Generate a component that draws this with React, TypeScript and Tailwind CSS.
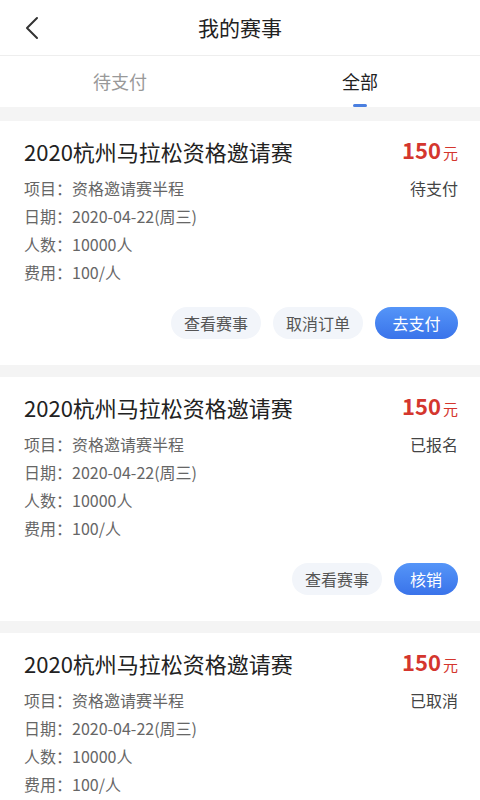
import React from 'react';

interface Order {
  title: string;
  price: number;
  status: string;
  item: string;
  date: string;
  count: string;
  fee: string;
  actions: { label: string; primary?: boolean; width: string }[];
}

const orders: Order[] = [
  {
    title: '2020杭州马拉松资格邀请赛',
    price: 150,
    status: '待支付',
    item: '资格邀请赛半程',
    date: '2020-04-22(周三)',
    count: '10000人',
    fee: '100/人',
    actions: [
      { label: '查看赛事', width: 'w-[90px]' },
      { label: '取消订单', width: 'w-[90px]' },
      { label: '去支付', primary: true, width: 'w-[83px]' },
    ],
  },
  {
    title: '2020杭州马拉松资格邀请赛',
    price: 150,
    status: '已报名',
    item: '资格邀请赛半程',
    date: '2020-04-22(周三)',
    count: '10000人',
    fee: '100/人',
    actions: [
      { label: '查看赛事', width: 'w-[90px]' },
      { label: '核销', primary: true, width: 'w-[64px]' },
    ],
  },
  {
    title: '2020杭州马拉松资格邀请赛',
    price: 150,
    status: '已取消',
    item: '资格邀请赛半程',
    date: '2020-04-22(周三)',
    count: '10000人',
    fee: '100/人',
    actions: [],
  },
];

const OrderCard: React.FC<{ order: Order }> = ({ order }) => {
  const rows = [
    ['项目', order.item],
    ['日期', order.date],
    ['人数', order.count],
    ['费用', order.fee],
  ];
  return (
    <div className="bg-white pl-6 pr-[22px] pt-[18px] pb-[26px]">
      {/* 标题 + 价格 */}
      <div className="flex items-center justify-between h-6">
        <h2 className="text-[22px] leading-6 text-[#222]">{order.title}</h2>
        <div className="flex items-baseline text-[#d4362e]">
          <span className="text-[22px] font-bold leading-6">{order.price}</span>
          <span className="text-[15px] ml-[2px]">元</span>
        </div>
      </div>

      {/* 详情 */}
      <div className="mt-[11px]">
        {rows.map(([k, v], i) => (
          <div key={k} className="flex items-center justify-between h-7 text-[16px] text-[#666]">
            <span>
              {k}：{v}
            </span>
            {i === 0 && <span className="text-[#444]">{order.status}</span>}
          </div>
        ))}
      </div>

      {/* 操作按钮 */}
      {order.actions.length > 0 && (
        <div className="mt-[21px] flex justify-end gap-3">
          {order.actions.map((a) => (
            <button
              key={a.label}
              className={
                a.primary
                  ? `${a.width} h-8 rounded-full bg-gradient-to-b from-[#5595f8] to-[#3a73ea] text-white text-[16px]`
                  : `${a.width} h-8 rounded-full bg-[#f2f5fa] text-[#555] text-[16px]`
              }
            >
              {a.label}
            </button>
          ))}
        </div>
      )}
    </div>
  );
};

const App: React.FC = () => {
  return (
    <div
      className="w-[480px] h-[800px] overflow-hidden bg-[#f4f4f4]"
      style={{ fontFamily: '"Noto Sans CJK SC", "Noto Sans", sans-serif' }}
    >
      {/* 顶部导航 */}
      <div className="relative h-14 bg-white flex items-center justify-center border-b border-[#eeeeee]">
        <button className="absolute left-[18px] top-[14px] w-7 h-7 flex items-center justify-center">
          <svg width="16" height="24" viewBox="0 0 16 24" fill="none">
            <path d="M13 2 L3 12 L13 22" stroke="#333" strokeWidth="2" strokeLinecap="round" strokeLinejoin="round" />
          </svg>
        </button>
        <h1 className="text-[21px] text-[#222]">我的赛事</h1>
      </div>

      {/* Tabs */}
      <div className="h-[51px] bg-white flex">
        <div className="flex-1 flex items-center justify-center text-[18px] text-[#999]">待支付</div>
        <div className="flex-1 relative flex items-center justify-center text-[18px] text-[#222]">
          全部
          <span className="absolute bottom-0 left-1/2 -translate-x-1/2 w-[14px] h-[3px] rounded-full bg-[#4a7fe0]" />
        </div>
      </div>

      <div className="mt-[14px] flex flex-col gap-3">
        {orders.map((o, i) => (
          <OrderCard key={i} order={o} />
        ))}
      </div>
    </div>
  );
};

export default App;
